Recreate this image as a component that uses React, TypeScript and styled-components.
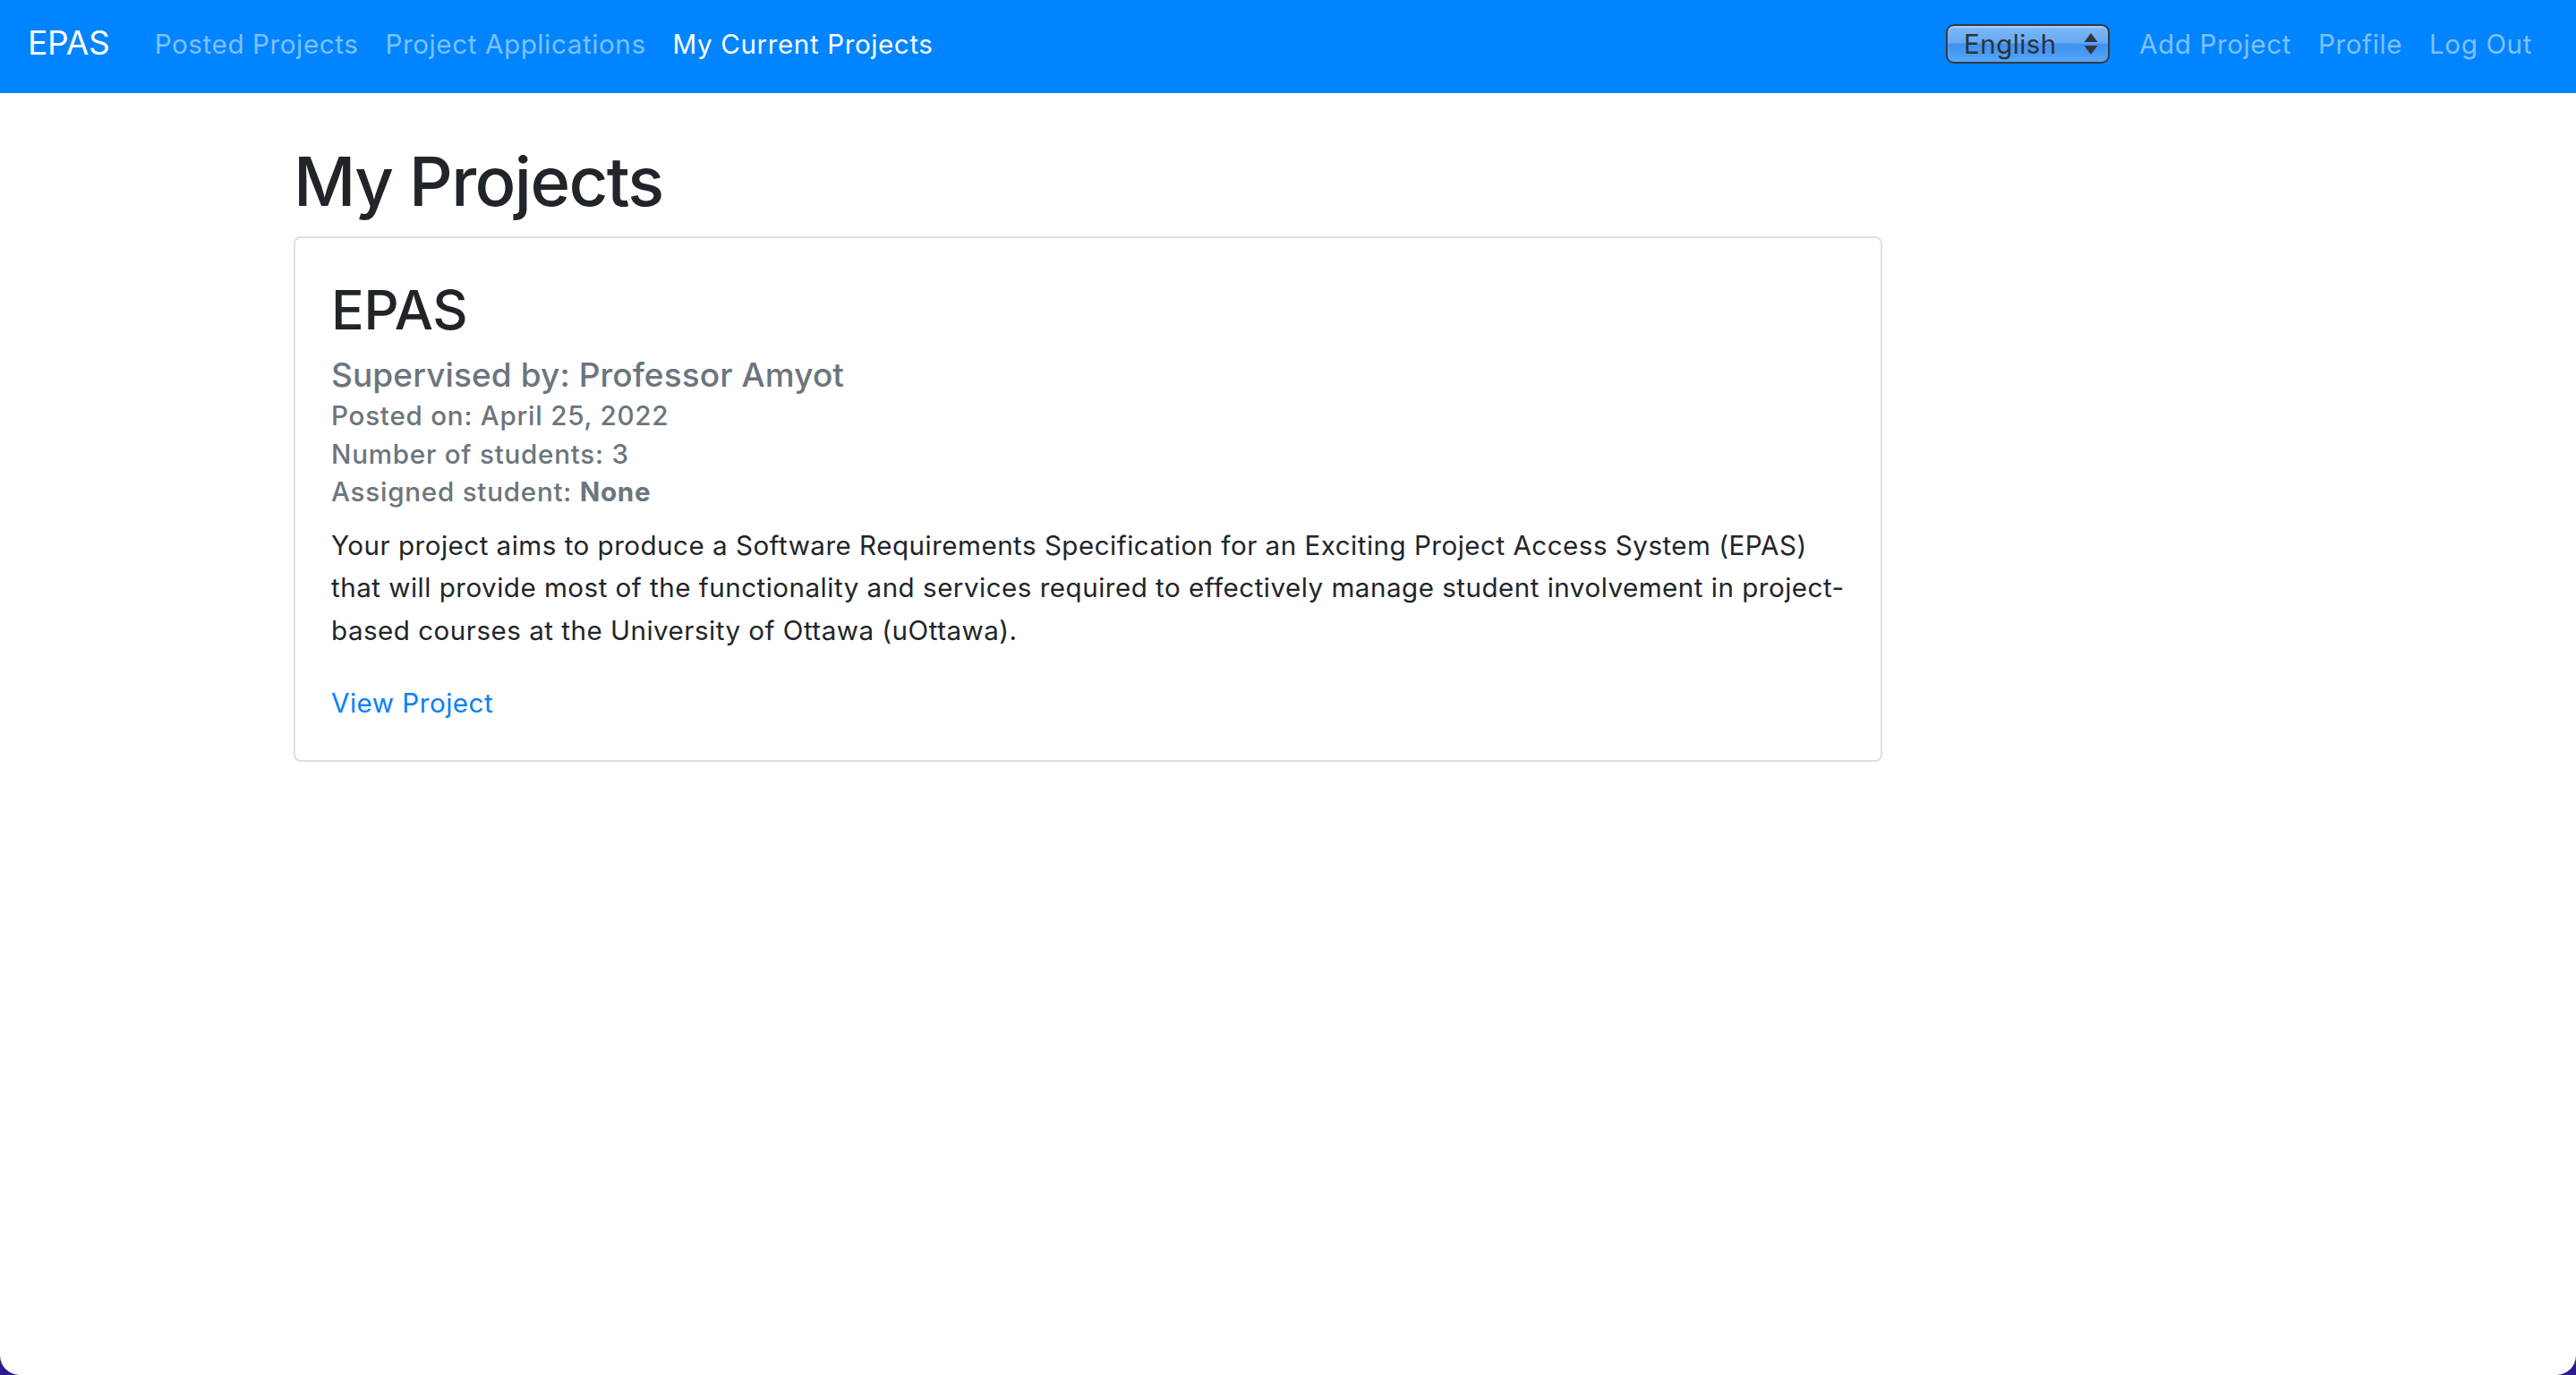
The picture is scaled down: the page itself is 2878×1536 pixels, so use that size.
import React from "react";
import styled, { createGlobalStyle } from "styled-components";

const GlobalStyle = createGlobalStyle`
  html, body {
    margin: 0;
    padding: 0;
    background: #2d1b8e;
  }
  body {
    font-family: Inter, "Noto Sans", "Liberation Sans", sans-serif;
    color: #212529;
  }
  * { box-sizing: border-box; }
`;

const Window = styled.div`
  min-height: 100vh;
  background: #ffffff;
  border-radius: 0 0 22px 22px;
  overflow: hidden;
`;

const NavBar = styled.nav`
  height: 104px;
  background: #0084ff;
  display: flex;
  align-items: center;
  padding: 0 34px 7px 31px;
`;

const Brand = styled.a`
  font-size: 37px;
  line-height: 1.2;
  color: #ffffff;
  text-decoration: none;
  margin-right: 35px;
  letter-spacing: -0.2px;
`;

const NavList = styled.div`
  display: flex;
  align-items: center;
`;

const NavLink = styled.a<{ $active?: boolean }>`
  font-size: 29.6px;
  line-height: 44px;
  padding: 0 15px;
  color: ${(p) => (p.$active ? "#ffffff" : "rgba(255,255,255,0.5)")};
  text-decoration: none;
  letter-spacing: 0.6px;
  white-space: nowrap;
`;

const Spacer = styled.div`
  flex: 1;
`;

const SelectWrap = styled.div`
  position: relative;
  width: 183px;
  height: 44px;
  margin-right: 18px;
`;

const LangSelect = styled.select`
  appearance: none;
  -webkit-appearance: none;
  width: 100%;
  height: 100%;
  border: 2px solid #36393d;
  border-radius: 9px;
  padding: 0 40px 0 18px;
  font-family: Inter, "Noto Sans", sans-serif;
  font-size: 29.6px;
  letter-spacing: 0.4px;
  color: #2e3236;
  background: linear-gradient(
    to bottom,
    #7db8f8 0%,
    #68aaf5 46%,
    #3f92f0 52%,
    #4a9cf6 80%,
    #5aa8fb 100%
  );
  box-shadow: inset 0 2px 2px rgba(255, 255, 255, 0.35);
  outline: none;
`;

const Arrows = styled.svg`
  position: absolute;
  right: 13px;
  top: 10px;
  pointer-events: none;
`;

const Main = styled.main`
  width: 1775px;
  margin-left: 328px;
  padding-top: 53px;
`;

const PageTitle = styled.h1`
  margin: 0 0 16px;
  font-size: 76px;
  line-height: 91px;
  font-weight: 500;
  letter-spacing: -1.6px;
  color: #212529;
`;

const Card = styled.section`
  border: 2px solid #dfdfdf;
  border-radius: 8px;
  padding: 44px 34px 42px 40px;
  background: #ffffff;
`;

const CardTitle = styled.h2`
  margin: 0 0 14px;
  font-size: 61px;
  line-height: 73px;
  font-weight: 500;
  letter-spacing: -0.3px;
`;

const Supervisor = styled.h5`
  margin: 0 0 2px;
  font-size: 37px;
  line-height: 44px;
  font-weight: 500;
  color: #6c757d;
  letter-spacing: 0.1px;
`;

const Meta = styled.h6`
  margin: 0;
  font-size: 29.6px;
  line-height: 42.5px;
  font-weight: 500;
  color: #6c757d;
  letter-spacing: 0.75px;
`;

const Strong = styled.span`
  font-weight: 700;
`;

const Description = styled.p`
  margin: 15px 0 34px;
  font-size: 29.6px;
  line-height: 47.7px;
  font-weight: 400;
  color: #212529;
  letter-spacing: 0.48px;
`;

const CardLink = styled.a`
  font-size: 29.6px;
  line-height: 44px;
  color: #0080ff;
  text-decoration: none;
  letter-spacing: 0.5px;
`;

export default function App() {
  return (
    <>
      <GlobalStyle />
      <Window>
        <NavBar>
          <Brand href="#">EPAS</Brand>
          <NavList>
            <NavLink href="#">Posted Projects</NavLink>
            <NavLink href="#">Project Applications</NavLink>
            <NavLink href="#" $active>
              My Current Projects
            </NavLink>
          </NavList>
          <Spacer />
          <SelectWrap>
            <LangSelect defaultValue="en">
              <option value="en">English</option>
              <option value="fr">Français</option>
            </LangSelect>
            <Arrows width="16" height="24" viewBox="0 0 16 24">
              <path d="M8 0 L15.5 10 L0.5 10 Z" fill="#33363a" />
              <path d="M8 24 L15.5 14 L0.5 14 Z" fill="#33363a" />
            </Arrows>
          </SelectWrap>
          <NavList>
            <NavLink href="#">Add Project</NavLink>
            <NavLink href="#">Profile</NavLink>
            <NavLink href="#">Log Out</NavLink>
          </NavList>
        </NavBar>
        <Main>
          <PageTitle>My Projects</PageTitle>
          <Card>
            <CardTitle>EPAS</CardTitle>
            <Supervisor>Supervised by: Professor Amyot</Supervisor>
            <Meta>Posted on: April 25, 2022</Meta>
            <Meta>Number of students: 3</Meta>
            <Meta>
              Assigned student: <Strong>None</Strong>
            </Meta>
            <Description>
              Your project aims to produce a Software Requirements Specification
              for an Exciting Project Access System (EPAS)
              <br />
              that will provide most of the functionality and services required
              to effectively manage student involvement in project-based courses
              at the University of Ottawa (uOttawa).
            </Description>
            <CardLink href="#">View Project</CardLink>
          </Card>
        </Main>
      </Window>
    </>
  );
}
